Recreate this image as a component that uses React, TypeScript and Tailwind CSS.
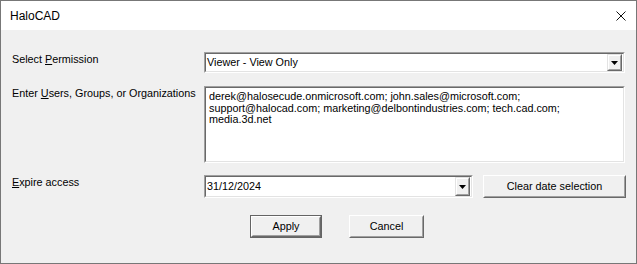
import React from "react";

const font = { fontFamily: '"Liberation Sans", Arial, sans-serif' };

function ArrowButton() {
  return (
    <div className="w-[15px] h-full border border-t-[#e3e3e3] border-l-[#e3e3e3] border-r-[#696969] border-b-[#696969] bg-[#f0f0f0]">
      <div className="w-full h-full border border-t-white border-l-white border-r-[#a0a0a0] border-b-[#a0a0a0] flex items-center justify-center">
        <svg width="7" height="4" viewBox="0 0 7 4">
          <path d="M0 0h7L3.5 4z" fill="#000" />
        </svg>
      </div>
    </div>
  );
}

function Sunken({ className, children }: { className: string; children: React.ReactNode }) {
  return (
    <div className={`border border-t-[#a0a0a0] border-l-[#a0a0a0] border-r-white border-b-white ${className}`}>
      <div className="w-full h-full border border-t-[#696969] border-l-[#696969] border-r-[#e3e3e3] border-b-[#e3e3e3] bg-white">
        {children}
      </div>
    </div>
  );
}

function Combo({ value, className }: { value: string; className: string }) {
  return (
    <Sunken className={className}>
      <div className="flex h-full items-stretch">
        <div className="flex-1 flex items-center pl-[1px] text-black">{value}</div>
        <div className="pr-[1px]">
          <ArrowButton />
        </div>
      </div>
    </Sunken>
  );
}

function Button({ label, className, isDefault = false }: { label: string; className: string; isDefault?: boolean }) {
  const inner = (
    <div className="w-full h-full border border-t-white border-l-white border-r-[#696969] border-b-[#696969] bg-[#f0f0f0]">
      <div className="w-full h-full border border-t-[#f0f0f0] border-l-[#f0f0f0] border-r-[#a0a0a0] border-b-[#a0a0a0] flex items-center justify-center text-black">
        {label}
      </div>
    </div>
  );
  if (isDefault) {
    return <div className={`border border-[#646464] ${className}`}>{inner}</div>;
  }
  return <div className={className}>{inner}</div>;
}

export default function App() {
  return (
    <div className="w-[637px] h-[264px] border border-[#777777] bg-[#f0f0f0] flex flex-col text-[10.8px] leading-[13px]" style={font}>
      {/* title bar */}
      <div className="h-[29px] bg-white flex items-center justify-between pl-[9px] pr-[10px]">
        <span className="text-[12px] text-black pt-[1px]">HaloCAD</span>
        <svg width="10" height="10" viewBox="0 0 10 10" className="mt-[1px]">
          <path d="M0.5 0.5l9 9M9.5 0.5l-9 9" stroke="#111" strokeWidth="1" />
        </svg>
      </div>

      <div className="flex-1 pl-[11px] pr-[10px] pt-[22px]">
        <div className="flex">
          <div className="w-[192px] pt-[1px]">
            Select <span className="underline">P</span>ermission
          </div>
          <Combo value="Viewer - View Only" className="w-[421px] h-[21px]" />
        </div>

        <div className="flex mt-[13px]">
          <div className="w-[192px] pt-[1px]">
            Enter <span className="underline">U</span>sers, Groups, or Organizations
          </div>
          <Sunken className="w-[421px] h-[77px]">
            <div className="pl-[3px] pt-[3px] pr-[4px] leading-[11.7px] text-black">
              derek@halosecude.onmicrosoft.com; john.sales@microsoft.com;
              <br />
              support@halocad.com; marketing@delbontindustries.com; tech.cad.com;
              <br />
              media.3d.net
            </div>
          </Sunken>
        </div>

        <div className="flex mt-[12px]">
          <div className="w-[192px] pt-[1px]">
            <span className="underline">E</span>xpire access
          </div>
          <Combo value="31/12/2024" className="w-[269px] h-[23px]" />
          <Button label="Clear date selection" className="ml-[10px] w-[143px] h-[23px]" />
        </div>

        <div className="flex mt-[17px] pl-[238px] gap-[27px]">
          <Button label="Apply" className="w-[72px] h-[23px]" isDefault />
          <Button label="Cancel" className="w-[75px] h-[23px]" />
        </div>
      </div>
    </div>
  );
}
